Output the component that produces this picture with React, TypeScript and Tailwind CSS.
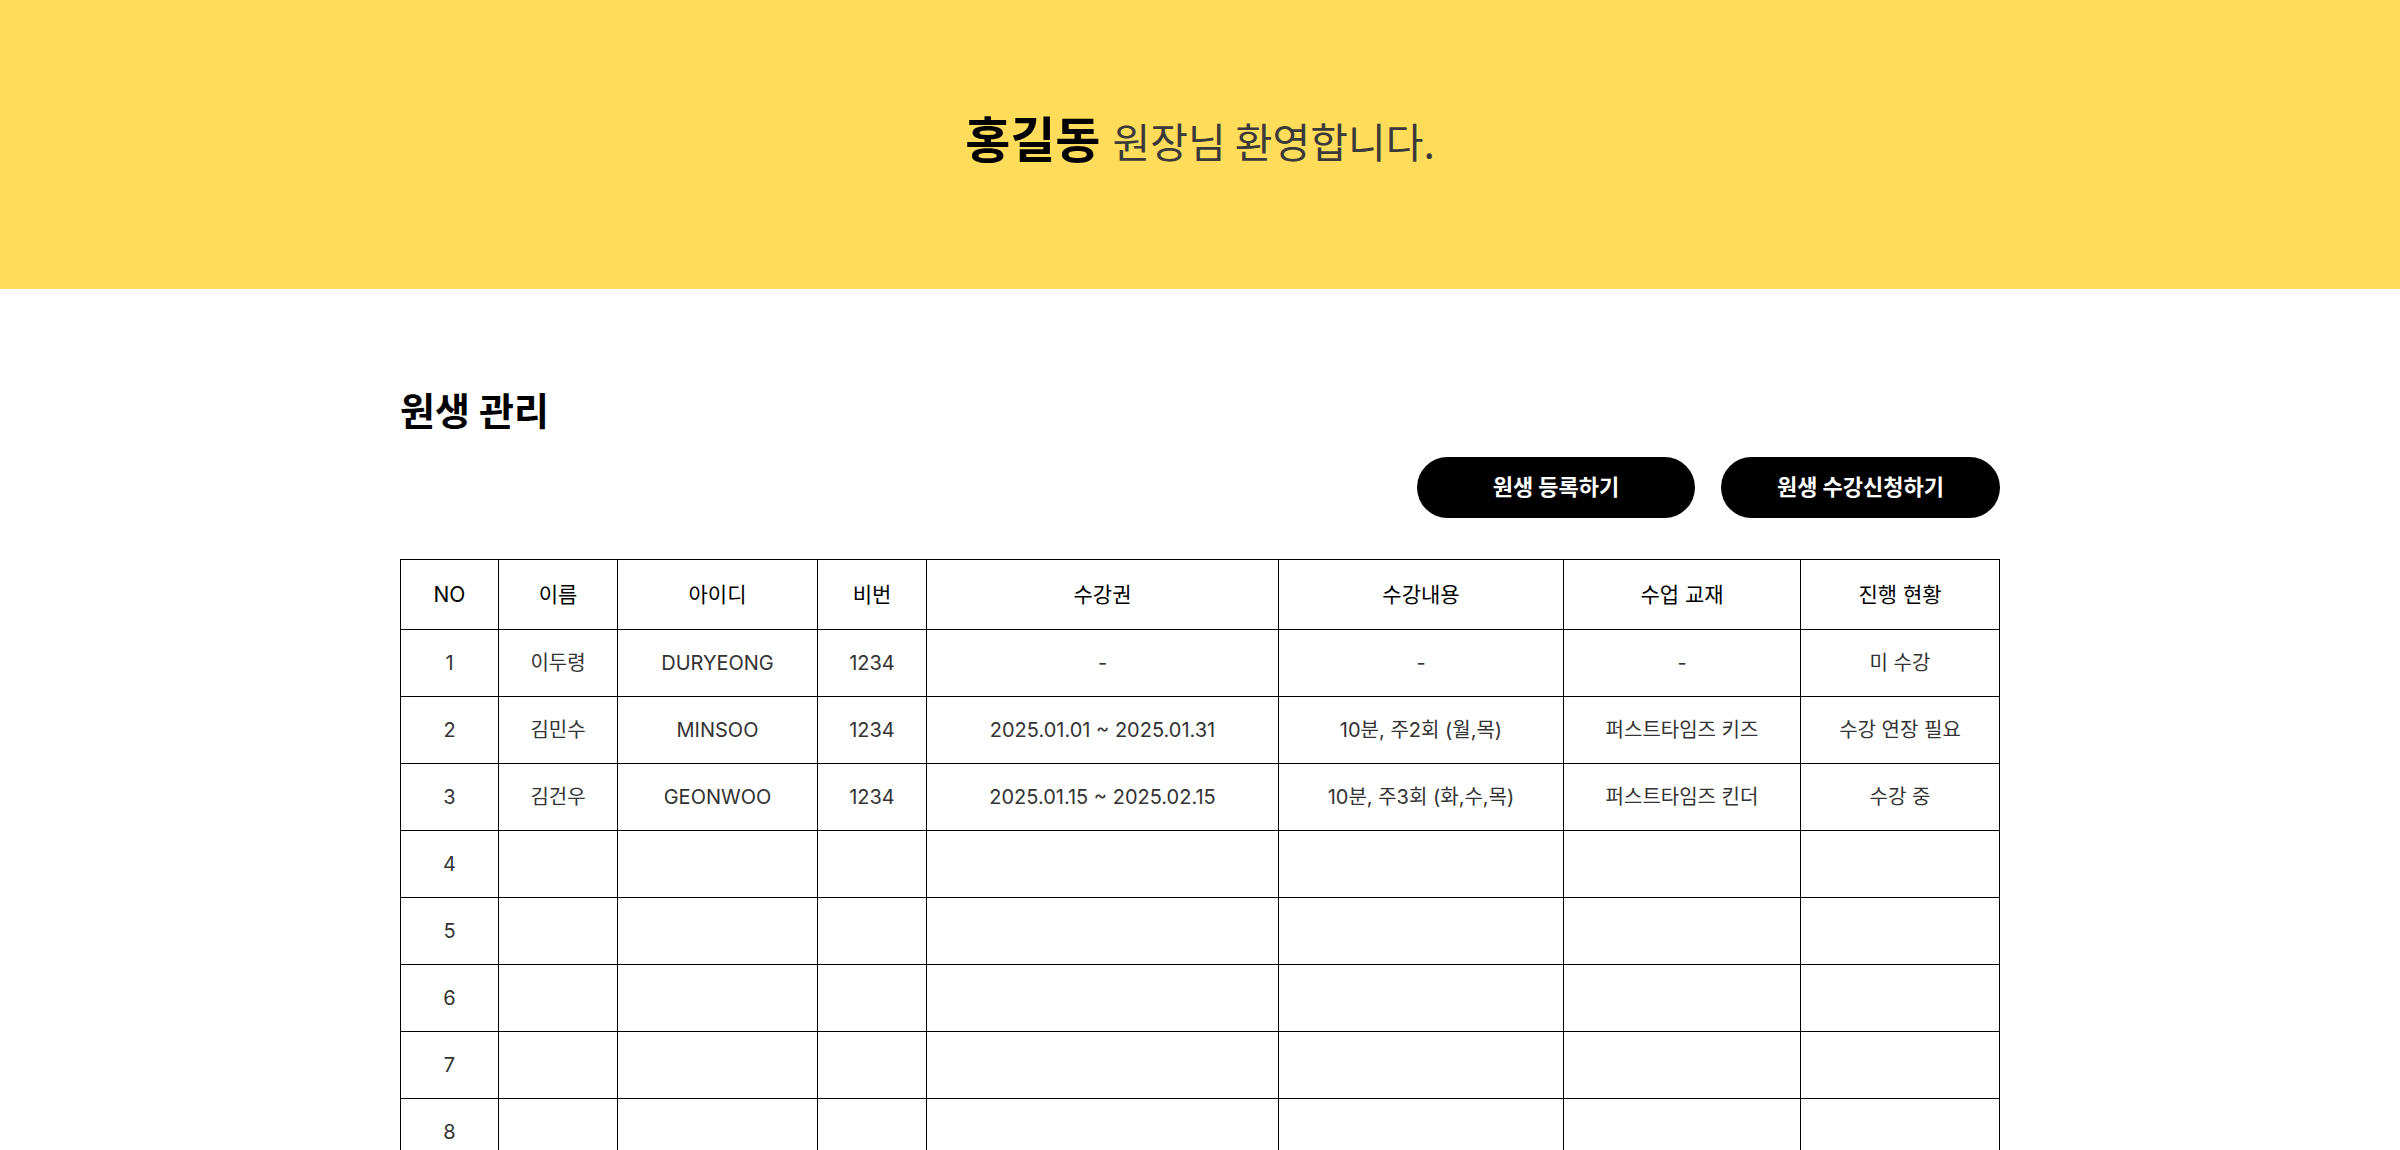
const rows = [
  { no: 1, name: "이두령", id: "DURYEONG", pw: "1234", ticket: "-", course: "-", book: "-", status: "미 수강" },
  { no: 2, name: "김민수", id: "MINSOO", pw: "1234", ticket: "2025.01.01 ~ 2025.01.31", course: "10분, 주2회 (월,목)", book: "퍼스트타임즈 키즈", status: "수강 연장 필요" },
  { no: 3, name: "김건우", id: "GEONWOO", pw: "1234", ticket: "2025.01.15 ~ 2025.02.15", course: "10분, 주3회 (화,수,목)", book: "퍼스트타임즈 킨더", status: "수강 중" },
  { no: 4 },
  { no: 5 },
  { no: 6 },
  { no: 7 },
  { no: 8 },
  { no: 9 },
  { no: 10 },
];

const heads = ["NO", "이름", "아이디", "비번", "수강권", "수강내용", "수업 교재", "진행 현황"];

export default function App() {
  return (
    <div className="min-h-screen bg-white font-['Inter','Noto_Sans_CJK_KR',sans-serif] text-black">
      <header className="h-[289px] bg-[#ffdd5a] flex items-center justify-center">
        <h1 className="flex items-baseline gap-3 -mt-4 font-['Noto_Sans_CJK_KR',sans-serif]">
          <span className="text-[49px] font-bold text-black">홍길동</span>
          <span className="text-[41px] font-normal text-[#3a3a3a]">원장님 환영합니다.</span>
        </h1>
      </header>

      <main className="w-[1600px] mx-auto pt-[96px] pb-20">
        <h2 className="text-[38px] font-bold leading-[52px]">원생 관리</h2>

        <div className="flex justify-end gap-[26px] mt-[20px]">
          <button className="w-[278px] h-[61px] rounded-full bg-black text-white text-[22px] font-bold">
            원생 등록하기
          </button>
          <button className="w-[279px] h-[61px] rounded-full bg-black text-white text-[22px] font-bold">
            원생 수강신청하기
          </button>
        </div>

        <table className="mt-[41px] w-full border-collapse table-fixed">
          <colgroup>
            <col className="w-[98px]" />
            <col className="w-[119px]" />
            <col className="w-[200px]" />
            <col className="w-[109px]" />
            <col className="w-[352px]" />
            <col className="w-[285px]" />
            <col className="w-[237px]" />
            <col />
          </colgroup>
          <thead>
            <tr>
              {heads.map((h) => (
                <th key={h} className="h-[70px] border border-black text-[21px] font-normal text-black">
                  {h}
                </th>
              ))}
            </tr>
          </thead>
          <tbody>
            {rows.map((r) => (
              <tr key={r.no} className="text-[20px] font-normal text-[#333] text-center">
                <td className="h-[67px] border border-black">{r.no}</td>
                <td className="border border-black">{r.name}</td>
                <td className="border border-black">{r.id}</td>
                <td className="border border-black">{r.pw}</td>
                <td className="border border-black">{r.ticket}</td>
                <td className="border border-black">{r.course}</td>
                <td className="border border-black">{r.book}</td>
                <td className="border border-black">{r.status}</td>
              </tr>
            ))}
          </tbody>
        </table>
      </main>
    </div>
  );
}
